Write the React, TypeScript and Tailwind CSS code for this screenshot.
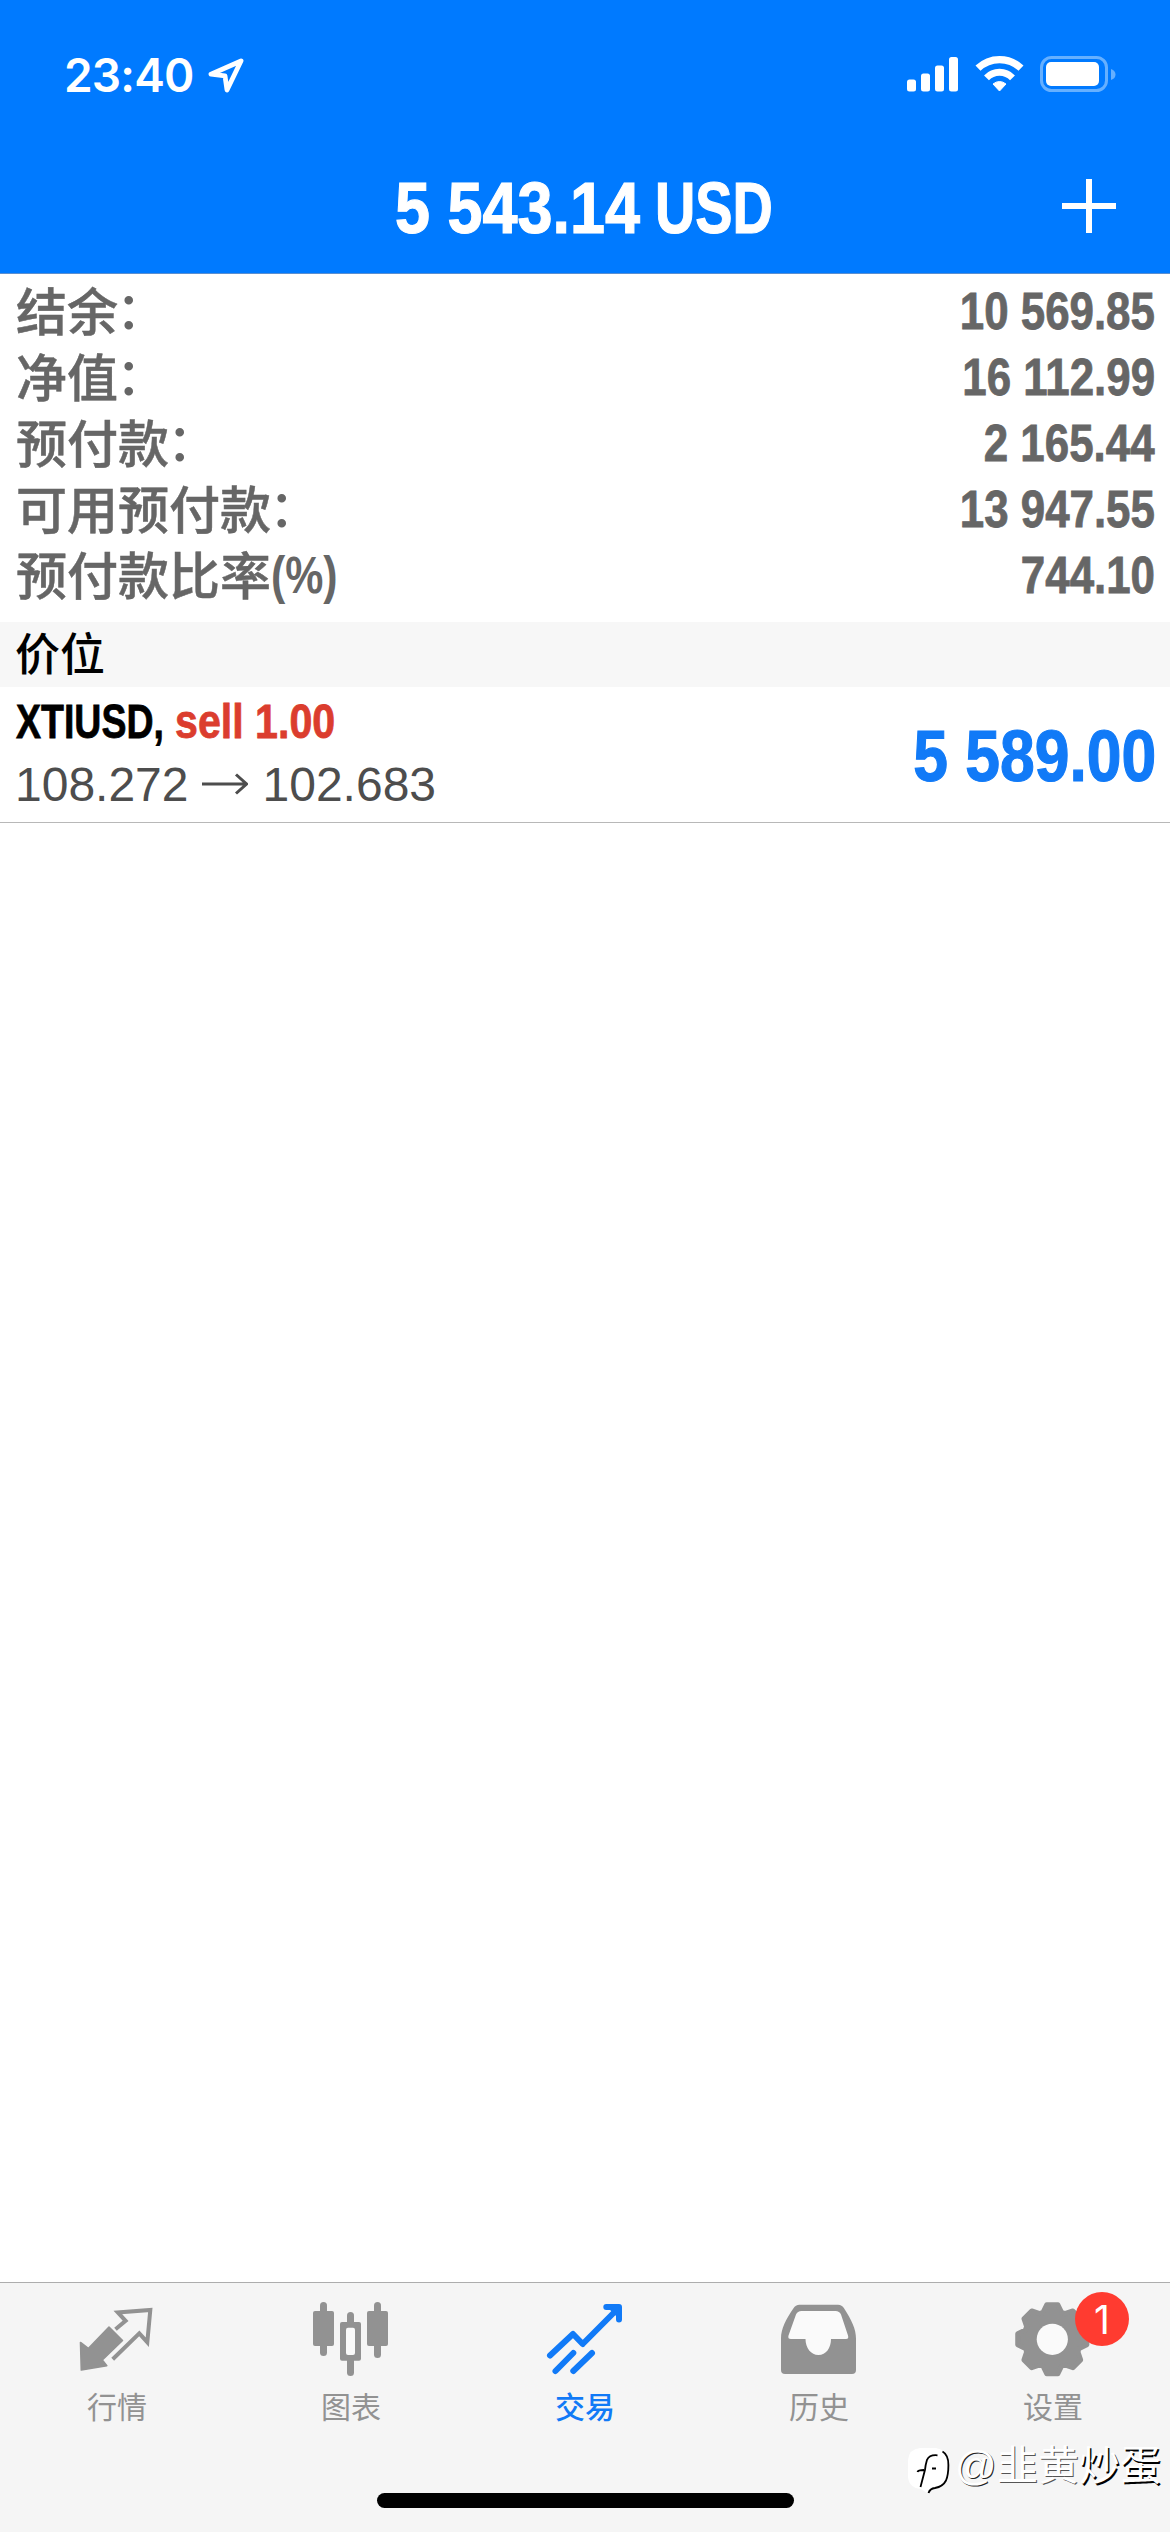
import type { ReactNode } from "react";

const BLUE = "#117af7";
const GRAY = "#929292";

const rows = [
  { label: "结余", colon: true, value: "10 569.85" },
  { label: "净值", colon: true, value: "16 112.99" },
  { label: "预付款", colon: true, value: "2 165.44" },
  { label: "可用预付款", colon: true, value: "13 947.55" },
  { label: "预付款比率", suffix: "(%)", value: "744.10" },
];

const StatusBar = () => (
  <div className="flex h-[149px] items-start justify-between pl-16 pr-[54px] text-white">
    <div className="flex h-[149px] items-center gap-3">
      <span className="font-['Inter',sans-serif] text-[46px] font-semibold leading-none tracking-[-0.8px]">
        23:40
      </span>
      <svg className="h-[40px] w-[40px]" viewBox="0 0 40 40" fill="none">
        <path
          d="M35 6 5 19.2l14 1.6 2 14.2Z"
          stroke="white"
          strokeWidth="4.8"
          strokeLinejoin="round"
        />
      </svg>
    </div>
    <div className="flex h-[148px] items-center">
      <svg className="mr-[17px] h-9 w-[51px]" viewBox="0 0 51 36" fill="white">
        <rect x="0" y="23.5" width="9" height="12" rx="2.5" />
        <rect x="14" y="17.5" width="9" height="18" rx="2.5" />
        <rect x="28" y="9.5" width="9" height="26" rx="2.5" />
        <rect x="42" y="1" width="9" height="34.5" rx="2.5" />
      </svg>
      <svg className="mr-4 h-[38px] w-[49px]" viewBox="0 0 49 38" fill="none">
        <path d="M3 13.2a31 31 0 0 1 43 0" stroke="white" strokeWidth="7.2" />
        <path d="M11.5 22.8a18 18 0 0 1 26 0" stroke="white" strokeWidth="6.8" />
        <path d="M18 29q6.5-5 13 0l-6.5 7Z" fill="white" stroke="white" strokeLinejoin="round" />
      </svg>
      <svg className="h-9 w-[76px]" viewBox="0 0 76 36" fill="none">
        <rect x="1.5" y="1.5" width="65" height="33" rx="10" stroke="#66b0ff" strokeWidth="3" />
        <rect x="6" y="6" width="53" height="24" rx="5" fill="white" />
        <path d="M71 13q4.5 1.5 4.5 5.5T71 24Z" fill="#66b0ff" />
      </svg>
    </div>
  </div>
);

const Header = () => (
  <header className="h-[274px] border-b border-[#5b8fd0] bg-[#007aff]">
    <StatusBar />
    <div className="relative flex h-[117px] items-center justify-center whitespace-nowrap text-[73px] font-bold leading-none text-white [-webkit-text-stroke:1.2px_currentColor]">
      <div className="w-[260px]">
        <div className="w-max origin-left scale-x-[0.862]">5 543.14</div>
      </div>
      <div className="w-[120px]">
        <div className="w-max origin-left scale-x-[0.765]">USD</div>
      </div>
      <svg className="absolute right-[54px] top-[30px] h-[54px] w-[54px]" viewBox="0 0 54 54">
        <path d="M27 0v54M0 27h54" stroke="white" strokeWidth="6" />
      </svg>
    </div>
  </header>
);

const Summary = () => (
  <section className="pb-[13px] pt-[5px] text-[51px] text-[#666666]">
    {rows.map((row) => (
      <div key={row.label} className="flex h-[66px] items-center justify-between pl-4 pr-[15px] leading-[66px]">
        <div className="flex whitespace-nowrap font-medium">
          <span className="-translate-y-[3px] font-['Noto_Sans_CJK_SC',sans-serif] [-webkit-text-stroke:0.5px_currentColor]">
            {row.label}
          </span>
          {row.colon && (
            <span className="-translate-x-[2px] -translate-y-[5px] font-['Noto_Sans_CJK_SC',sans-serif]">：</span>
          )}
          {row.suffix && (
            <span className="origin-left scale-x-[0.84] font-bold">{row.suffix}</span>
          )}
        </div>
        <div className="origin-right scale-x-[0.86] whitespace-nowrap font-bold [-webkit-text-stroke:0.8px_currentColor]">
          {row.value}
        </div>
      </div>
    ))}
  </section>
);

const Position = () => (
  <div className="flex h-[136px] items-center justify-between border-b border-[#b8b8b8] pr-[14px]">
    <div className="whitespace-nowrap pb-[4px]">
      <div className="flex h-[63px] items-center pl-4 text-[49px] font-bold leading-[63px] [-webkit-text-stroke:0.8px_currentColor]">
        <div className="w-[159px]">
          <div className="w-max origin-left scale-x-[0.765] text-black">XTIUSD,</div>
        </div>
        <div className="origin-left scale-x-[0.84] text-[#db3d2e]">sell 1.00</div>
      </div>
      <div className="flex h-[63px] items-center pl-[15px] text-[48px] leading-[63px] text-[#4d4d4d]">
        <span>108.272</span>
        <svg className="ml-[13px] mr-[15px] h-6 w-[46px]" viewBox="0 0 46 24" fill="none">
          <path d="M0 12h44M34 2.5 44.5 12 34 21.5" stroke="#4d4d4d" strokeWidth="3" />
        </svg>
        <span>102.683</span>
      </div>
    </div>
    <div
      className="origin-right scale-x-[0.855] whitespace-nowrap pt-[2px] text-[73px] font-bold leading-none [-webkit-text-stroke:1.2px_currentColor]"
      style={{ color: BLUE }}
    >
      5 589.00
    </div>
  </div>
);

const QuotesIcon = () => (
  <svg className="h-20 w-20" viewBox="0 0 80 80" fill="none">
    <path
      d="M3.5 42.5 11.3 48.5 32 27l13.5 13.5L25.3 60l4.5 5.7L4.3 70Z"
      fill={GRAY}
      stroke={GRAY}
      strokeWidth="1.6"
      strokeLinejoin="round"
    />
    <path
      d="M38.5 29.2 48.6 20.8 40.8 12.4 73.3 10 70.3 42.2 62.3 33.3 35.7 59.3"
      stroke={GRAY}
      strokeWidth="4"
    />
  </svg>
);

const ChartIcon = () => (
  <svg className="h-20 w-20" viewBox="0 0 80 80" fill={GRAY}>
    <rect x="9" y="2" width="7" height="54" rx="3.5" />
    <rect x="2" y="11" width="21" height="35" rx="2" />
    <rect x="63" y="2" width="7" height="56" rx="3.5" />
    <rect x="56" y="11" width="21" height="35" rx="2" />
    <rect x="36" y="12" width="7" height="64" rx="3.5" />
    <rect x="29" y="22" width="21" height="38.7" rx="2" />
    <rect x="35" y="27.7" width="9" height="27.3" rx="2" fill="#fafafa" />
  </svg>
);

const TradeIcon = () => (
  <svg className="h-20 w-20" viewBox="0 0 80 80" fill="none" stroke={BLUE} strokeWidth="6" strokeLinecap="round">
    <path d="M5 55.5 28 34l9.7 10L73 8.5" strokeLinejoin="round" />
    <path d="M61.3 7H74v12.5" strokeLinejoin="round" />
    <path d="M66 8h7v7Z" fill={BLUE} strokeLinejoin="round" strokeWidth="4" />
    <path d="M10.5 71 28.3 53M28.3 71 47 53" />
  </svg>
);

const HistoryIcon = () => (
  <svg className="h-20 w-20" viewBox="0 0 80 80">
    <path
      d="M20.5 4.7h38.5q4 0 6 3.6C72.5 20 77 29 77 38.5V70q0 4-4 4H6q-4 0-4-4V38.5C2 29 7 19 14.5 8.3q2-3.6 6-3.6Z"
      fill={GRAY}
    />
    <path
      d="M22.5 11h34q4 0 5.5 3.5L69 35.5q1 3.5-2 3.5H52c0 9-5 16-12.5 16S26.5 48 26.5 39H12q-3.5 0-2.5-3.5L17 14.5Q18.5 11 22.5 11Z"
      fill="#fafafa"
    />
  </svg>
);

// eight teeth, four corners each, clockwise from the top
const gearPoints = Array.from({ length: 8 }, (_, i) =>
  [
    [-19, 28.5],
    [-9, 35],
    [9, 35],
    [19, 28.5],
  ].map(([deg, r]) => {
    const a = ((i * 45 + deg) * Math.PI) / 180;
    return `${(39.3 + r * Math.sin(a)).toFixed(2)},${(39.3 - r * Math.cos(a)).toFixed(2)}`;
  })
)
  .flat()
  .join(" ");

const SettingsIcon = () => (
  <svg className="h-20 w-20" viewBox="0 0 80 80">
    <polygon points={gearPoints} fill={GRAY} stroke={GRAY} strokeWidth="5" strokeLinejoin="round" />
    <circle cx="39.3" cy="39.3" r="15.6" fill="#fafafa" />
  </svg>
);

interface TabProps {
  label: string;
  icon: ReactNode;
  active?: boolean;
  badge?: number;
}

const Tab: React.FC<TabProps> = ({ label, icon, active, badge }) => (
  <div
    className={`relative flex flex-1 flex-col items-center pt-[17px] ${
      active ? "font-medium text-[#117af7]" : "font-normal text-[#929292]"
    }`}
  >
    {icon}
    <span className="mt-[5px] font-['Noto_Sans_CJK_SC',sans-serif] text-[30px] leading-[40px]">{label}</span>
    {badge && (
      <span className="absolute left-[139px] top-[9px] flex h-[54px] w-[54px] items-center justify-center rounded-full bg-[#ff3b30] font-['Inter',sans-serif] text-[39px] leading-none text-white">
        {badge}
      </span>
    )}
  </div>
);

const Watermark = () => (
  <div className="absolute left-[905px] top-[160px] flex h-[54px] items-center whitespace-nowrap text-[41px] leading-[54px] text-white">
    <svg className="h-[54px] w-[50px]" viewBox="0 0 50 54" fill="none">
      <path d="M15 5h16q11 2 12 13v14q0 10-10 12l-8 2-3 4-6-4Q4 45 3 34V17Q4 6 15 5Z" fill="white" />
      <path
        d="M37.5 8.5Q43.5 12 43.4 22q0 10-2.4 15.5-3 6-11 7.5-5 .5-6.5 5M32.5 12.3q-8-.8-10.5 4.5-1.5 5-2 10L15.5 44M12.5 29q.5-2 6.5-2M27 25.5h4"
        stroke="black"
        strokeWidth="1.8"
      />
    </svg>
    <span className="w-[42px] -translate-y-[4px] [text-shadow:1px_1px_0_#222]">@</span>
    <span className="-translate-y-[8px] font-['Noto_Sans_CJK_SC',sans-serif] [text-shadow:1px_1px_0_#555]">韭黄</span>
    <span className="-translate-y-[8px] font-['Noto_Sans_CJK_SC',sans-serif] [text-shadow:1.5px_1.5px_0_#000]">炒蛋</span>
  </div>
);

const TabBar = () => (
  <nav className="relative flex h-[250px] flex-col border-t border-[#adadad] bg-[#f5f5f5]">
    <div className="flex h-[210px]">
      <Tab label="行情" icon={<QuotesIcon />} />
      <Tab label="图表" icon={<ChartIcon />} />
      <Tab label="交易" icon={<TradeIcon />} active />
      <Tab label="历史" icon={<HistoryIcon />} />
      <Tab label="设置" icon={<SettingsIcon />} badge={1} />
    </div>
    <div className="mx-auto h-[15px] w-[417px] rounded-full bg-black" />
    <Watermark />
  </nav>
);

export default function App() {
  return (
    <div className="flex h-[2532px] w-[1170px] flex-col overflow-hidden bg-white font-['Liberation_Sans','Noto_Sans_CJK_SC',sans-serif]">
      <Header />
      <Summary />
      <div className="flex h-[65px] items-center bg-[#f7f7f7] pl-[15px]">
        <span className="-translate-y-[3px] font-['Noto_Sans_CJK_SC',sans-serif] text-[45px] font-medium leading-[65px] text-black">
          价位
        </span>
      </div>
      <Position />
      <div className="flex-1" />
      <TabBar />
    </div>
  );
}
